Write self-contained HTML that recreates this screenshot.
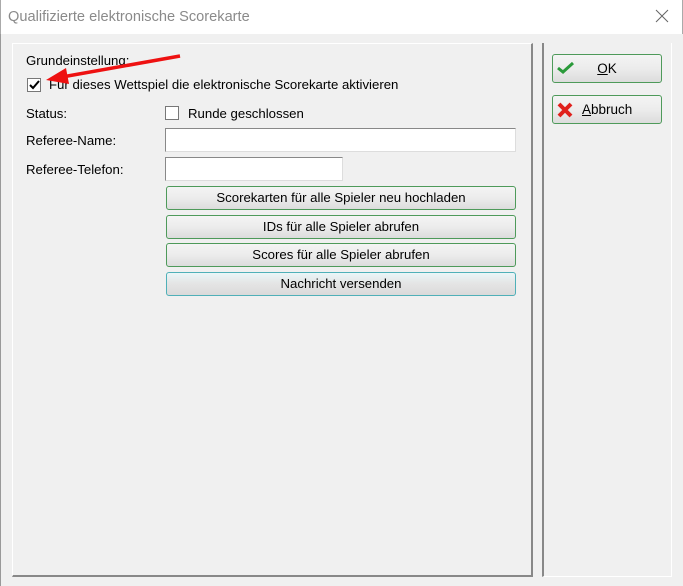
<!DOCTYPE html>
<html><head><meta charset="utf-8">
<style>
*{margin:0;padding:0;box-sizing:border-box}
body{width:683px;height:586px;background:#f0f0f0;font-family:"Liberation Sans",Arial,sans-serif;font-size:13.2px;color:#000;position:relative;overflow:hidden}
.abs{position:absolute}
.title{left:0;top:0;width:683px;height:34px;background:#fff;border-left:1px solid #aaa;border-right:1px solid #aaa}
.title span{position:absolute;left:7px;top:9px;font-size:14.6px;color:#8a8a8a}
.lp{left:12px;top:43px;width:521px;height:534px;border-top:1px solid #fff;border-left:1px solid #fff;border-right:2px solid #888;border-bottom:2px solid #888}
.rp{left:542px;top:43px;width:130px;height:534px;border-left:2px solid #888;border-right:1px solid #fff;border-bottom:1px solid #fff}
.cb{width:14px;height:14px;background:#fff;border:1px solid #777}
.inp{background:#fff;border-top:1px solid #888;border-left:1px solid #888;border-right:1px solid #ddd;border-bottom:1px solid #ddd}
.btn{border:1px solid #4e9a5a;border-radius:3px;background:linear-gradient(#f4f4f4,#ececec 50%,#dcdcdc);text-align:center;line-height:21px}
.btn2{border-color:#4fb0b8;background:linear-gradient(#eaf6f8,#e4e4e4 50%,#dadada)}
</style></head><body>
<div class="abs title"><span>Qualifizierte elektronische Scorekarte</span>
<svg class="abs" style="left:654px;top:9px" width="14" height="14"><path d="M1 1L13 13M13 1L1 13" stroke="#666" stroke-width="1"/></svg></div>
<div class="abs" style="left:0;top:34px;width:1px;height:552px;background:#999"></div>
<div class="abs lp"></div>
<div class="abs rp"></div>
<div class="abs" style="left:26px;top:53px">Grundeinstellung:</div>
<div class="abs cb" style="left:27px;top:78px"></div>
<svg class="abs" style="left:28px;top:79px" width="13" height="13"><path d="M2 6L5 9L11 2" stroke="#000" stroke-width="2" fill="none"/></svg>
<div class="abs" style="left:49px;top:77px">Für dieses Wettspiel die elektronische Scorekarte aktivieren</div>
<div class="abs" style="left:26px;top:106px">Status:</div>
<div class="abs cb" style="left:165px;top:106px"></div>
<div class="abs" style="left:188px;top:106px">Runde geschlossen</div>
<div class="abs" style="left:26px;top:133px">Referee-Name:</div>
<div class="abs inp" style="left:165px;top:128px;width:351px;height:24px"></div>
<div class="abs" style="left:26px;top:162px">Referee-Telefon:</div>
<div class="abs inp" style="left:165px;top:157px;width:178px;height:24px"></div>
<div class="abs btn" style="left:166px;top:186px;width:350px;height:24px">Scorekarten für alle Spieler neu hochladen</div>
<div class="abs btn" style="left:166px;top:215px;width:350px;height:24px">IDs für alle Spieler abrufen</div>
<div class="abs btn" style="left:166px;top:243px;width:350px;height:24px">Scores für alle Spieler abrufen</div>
<div class="abs btn btn2" style="left:166px;top:272px;width:350px;height:24px">Nachricht versenden</div>
<div class="abs btn" style="left:552px;top:54px;width:110px;height:29px;line-height:27px;font-size:13.5px"><span style="text-decoration:underline">O</span>K</div>
<svg class="abs" style="left:557px;top:61px" width="18" height="14"><path d="M1 7L6 11L16 2" stroke="#2a9a3a" stroke-width="3" fill="none"/></svg>
<div class="abs btn" style="left:552px;top:95px;width:110px;height:29px;line-height:27px;font-size:13.5px;text-align:left;padding-left:29px"><span style="text-decoration:underline">A</span>bbruch</div>
<svg class="abs" style="left:557px;top:102px" width="16" height="16"><path d="M2 2L14 14M14 2L2 14" stroke="#e0201c" stroke-width="4"/></svg>
<svg class="abs" style="left:0;top:0" width="683" height="586"><path d="M180 56L62 77" stroke="#ee1111" stroke-width="3.5"/><path d="M46 80L66 68L69 84Z" fill="#ee1111"/></svg>
</body></html>
